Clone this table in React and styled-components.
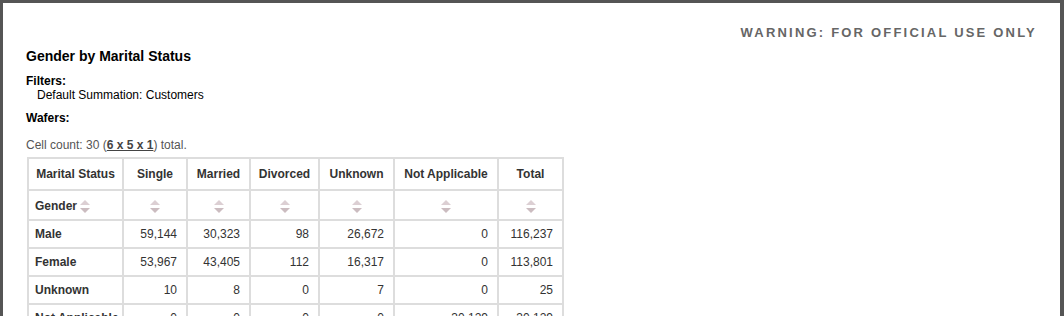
import React from "react";
import styled, { createGlobalStyle } from "styled-components";

const Global = createGlobalStyle`
  html, body { margin: 0; padding: 0; background: #fff; }
  body { font-family: "Liberation Sans", Arial, sans-serif; }
`;

const Frame = styled.div`
  box-sizing: border-box;
  width: 1064px;
  height: 316px;
  overflow: hidden;
  border-top: 3px solid #555;
  border-left: 3px solid #555;
  border-right: 4px solid #555;
  background: #fff;
  padding: 15px 25px 0 23px;
`;

const Warning = styled.div`
  text-align: right;
  font-size: 13px;
  font-weight: bold;
  letter-spacing: 2.2px;
  line-height: 30px;
  height: 30px;
  color: #666;
  margin-right: -2px;
`;

const Title = styled.h1`
  margin: 0;
  font-size: 14px;
  line-height: 16px;
  font-weight: bold;
  color: #000;
`;

const Label = styled.div`
  font-size: 12px;
  line-height: 14px;
  font-weight: bold;
  color: #000;
  margin-top: ${(p) => p.$gap}px;
`;

const Indented = styled.div`
  font-size: 12px;
  line-height: 14px;
  color: #000;
  padding-left: 11px;
`;

const Count = styled.div`
  font-size: 12px;
  line-height: 14px;
  color: #555;
  margin-top: 13px;
  margin-bottom: 5px;
`;

const Dims = styled.span`
  font-weight: bold;
  color: #444;
  text-decoration: underline;
`;

const Table = styled.table`
  border-collapse: collapse;
  table-layout: fixed;
  width: 535px;
  font-size: 12px;
  color: #333;
  margin-left: 1px;
`;

const Cell = styled.td`
  border: 2px solid #ddd;
  line-height: 14px;
  height: 14px;
  padding-top: ${(p) => (p.$head ? 8 : 6)}px;
  padding-bottom: ${(p) => (p.$sort ? 6 : p.$head ? 8 : 6)}px;
  padding-left: 6px;
  padding-right: ${(p) => (p.$num ? 9 : 6)}px;
  text-align: ${(p) => (p.$num ? "right" : p.$center ? "center" : "left")};
  font-weight: ${(p) => (p.$bold ? "bold" : "normal")};
  white-space: nowrap;
  overflow: hidden;
`;

const SortWrap = styled.span`
  display: inline-block;
  height: 14px;
  line-height: 0;
  vertical-align: top;
  margin-left: ${(p) => (p.$inline ? "3px" : "0")};
  svg { display: block; margin-top: 1px; }
`;

const SortIcon = ({ inline }) => (
  <SortWrap $inline={inline}>
    <svg width="10" height="13" viewBox="0 0 10 13">
      <polygon points="0,5 5,0 10,5" fill="#dccfd3" />
      <polygon points="0,8 5,13 10,8" fill="#cbbcc0" />
    </svg>
  </SortWrap>
);

const cols = [95, 64, 63, 69, 75, 104, 65];
const heads = ["Single", "Married", "Divorced", "Unknown", "Not Applicable", "Total"];
const rows = [
  ["Male", "59,144", "30,323", "98", "26,672", "0", "116,237"],
  ["Female", "53,967", "43,405", "112", "16,317", "0", "113,801"],
  ["Unknown", "10", "8", "0", "7", "0", "25"],
  ["Not Applicable", "0", "0", "0", "0", "30,129", "30,129"],
];

export default function App() {
  return (
    <>
      <Global />
      <Frame>
        <Warning>WARNING: FOR OFFICIAL USE ONLY</Warning>
        <Title>Gender by Marital Status</Title>
        <Label $gap={10}>Filters:</Label>
        <Indented>Default Summation: Customers</Indented>
        <Label $gap={9}>Wafers:</Label>
        <Count>
          Cell count: 30 (<Dims>6 x 5 x 1</Dims>) total.
        </Count>
        <Table>
          <colgroup>
            {cols.map((w, i) => (
              <col key={i} style={{ width: w }} />
            ))}
          </colgroup>
          <tbody>
            <tr>
              <Cell as="th" $head $bold $center>Marital Status</Cell>
              {heads.map((h) => (
                <Cell as="th" key={h} $head $bold $center>{h}</Cell>
              ))}
            </tr>
            <tr>
              <Cell as="th" $head $sort $bold>
                Gender<SortIcon inline />
              </Cell>
              {heads.map((h) => (
                <Cell as="th" key={h} $head $sort $center>
                  <SortIcon />
                </Cell>
              ))}
            </tr>
            {rows.map((r) => (
              <tr key={r[0]}>
                <Cell $bold>{r[0]}</Cell>
                {r.slice(1).map((v, i) => (
                  <Cell key={i} $num>{v}</Cell>
                ))}
              </tr>
            ))}
          </tbody>
        </Table>
      </Frame>
    </>
  );
}
